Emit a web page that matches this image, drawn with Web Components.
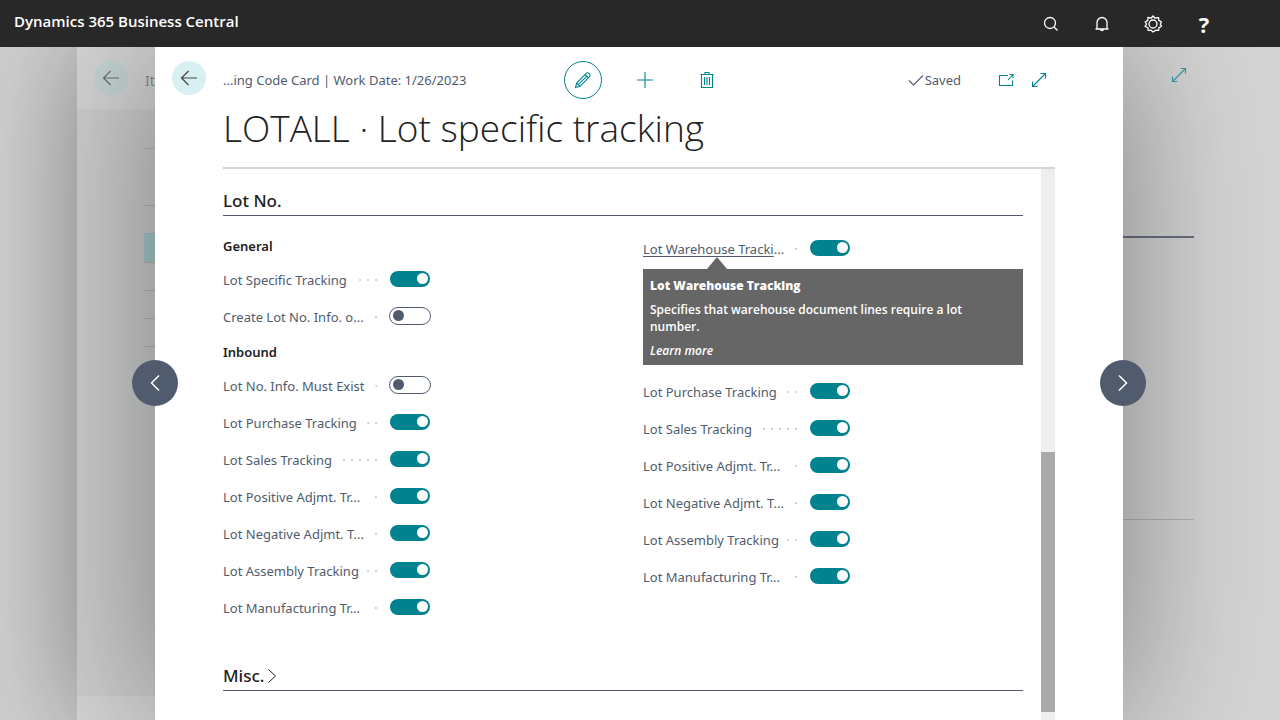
<!DOCTYPE html>
<html lang="en">
<head>
<meta charset="utf-8">
<title>Dynamics 365 Business Central</title>
<style>
html, body { margin: 0; }
body {
  --teal: #00838f; --slate: #505c6d; --ink: #212121;
  font-family: "Noto Sans", "Open Sans", sans-serif; font-size: 13px; color: var(--slate);
}
</style>
</head>
<body>
<bc-app></bc-app>
<script>
const define = (name, html, setup) => customElements.define(name, class extends HTMLElement {
  constructor() {
    super();
    this.attachShadow({ mode: 'open' }).innerHTML = html;
  }
  connectedCallback() { if (setup) setup(this, this.shadowRoot); }
});

const ICONS = {
  back: [20, '<path d="M18 10H2.500M9.500 3l-7 7 7 7"/>'],
  search: [16, '<circle cx="7" cy="7" r="5.500"/><path d="m11 11 3.500 3.500"/>'],
  bell: [16, '<path d="M3 13V6.500a5 5 0 0 1 10 0V13M1.500 13h13M6.500 13.500c.2 1.600 2.800 1.600 3 0"/>'],
  gear: [18, '<circle cx="9" cy="9" r="4"/><path d="M9 1l1.800 2 3.800-.4.1 2.700 2.800 1.700-1.200 2 1.200 2.300-2.600 1.400-.3 2.700-2.700-.2L9 17l-2-1.800-2.800.2-.4-2.700-2.700-1.400L2.500 9 1.200 7l2.600-1.700.2-2.700 3.200.4z"/>'],
  pencil: [18, '<path d="m1.500 16.500 1.200-4.500L12.500 2.200c1.700-1.300 4.500 1.300 3.300 3.300L6 15.300zM2.700 12 6 15.300M11.200 3.500l3.300 3.300M4.300 13.700l8.600-8.600"/>'],
  plus: [18, '<path d="M9 1v16M1 9h16"/>'],
  trash: [18, '<path d="M3.500 4v12.500h11V4M2.500 3.500h13M7 3V1.500h4V3M6.500 6v8M9 6v8M11.500 6v8"/>'],
  check: [16, '<path d="m1 8.500 4.500 4.500L15 3.500"/>'],
  popout: [16, '<path d="M10 3.500H1.500v10h13V8.500M10 8l5-5.500M11.500 2.500H15V6"/>'],
  expand: [16, '<path d="M1.500 14.500l13-13M9.500 1.500h5v5M1.500 9.500v5h5"/>'],
  left: [20, '<path d="m14 2.500-7.500 7.500 7.500 7.500"/>'],
  right: [20, '<path d="m6 2.500 7.500 7.500-7.500 7.500"/>'],
  chevron: [16, '<path d="m4.500 1.500 7 6.500-7 6.500"/>']
};
define('bc-icon', `<style>
  :host { display: inline-flex; flex: none; }
  svg { display: block; fill: none; stroke: currentColor; stroke-width: var(--stroke, 1.2); }
</style><svg aria-hidden="true"></svg>`, (el, root) => {
  const [size, art] = ICONS[el.getAttribute('name')];
  const svg = root.querySelector('svg');
  svg.setAttribute('viewBox', `0 0 ${size} ${size}`);
  svg.setAttribute('width', size);
  svg.setAttribute('height', size);
  svg.innerHTML = art;
});

define('bc-topbar', `<style>
  :host { display: flex; align-items: center; justify-content: space-between; height: 47px; padding: 0 59px 0 14px; background: #282828; color: #fff; }
  .brand { font: 600 15px/20px "Open Sans", sans-serif; padding-bottom: 6px; }
  nav { display: flex; }
  button { width: 34px; height: 34px; margin-left: 17px; padding: 0; border: 0; background: none; color: inherit; display: grid; place-items: center; font: 700 22px "Open Sans", sans-serif; }
  bc-icon { --stroke: 1.3; }
</style>
<div class="brand">Dynamics 365 Business Central</div>
<nav>
  <button aria-label="Search"><bc-icon name="search"></bc-icon></button>
  <button aria-label="Notifications"><bc-icon name="bell"></bc-icon></button>
  <button aria-label="Settings"><bc-icon name="gear"></bc-icon></button>
  <button aria-label="Help">?</button>
</nav>`);

define('bc-back', `<style>
  :host { display: block; flex: none; }
  button { width: 34px; height: 34px; padding: 0; border: 0; border-radius: 50%; background: var(--disc, #d9f0f2); color: #444; display: grid; place-items: center; }
</style><button aria-label="Back"><bc-icon name="back"></bc-icon></button>`);

/* Page that lies under the open card */
define('bc-list-page', `<style>
  :host { display: flex; flex-direction: column; background: #d4d4d4; box-shadow: 0 0 110px rgba(0,0,0,.3); }
  header { display: flex; align-items: center; height: 62px; padding: 0 93px 0 17px; }
  bc-back { opacity: .7; --disc: #c0d4d8; }
  header span { margin-left: 17px; padding-top: 4px; font-size: 14px; opacity: .6; flex: 1; }
  header bc-icon { color: var(--teal); opacity: .7; padding-bottom: 6px; }
  .body { flex: 1; display: flex; justify-content: space-between; background: linear-gradient(90deg, #cccecd, #cccecd 78px, #d4d4d4 300px); padding: 0 86px 0 67px; }
  .rows { width: 60px; padding-top: 39px; }
  .rows div { height: 28px; box-sizing: border-box; border-top: 1px solid #b4b6b5; }
  .rows .tall { height: 57px; }
  .rows .sel { background: #a8cccd; height: 29px; border-top-color: #a8c0c0; }
  .facts { width: 120px; padding-top: 127px; }
  .facts div { height: 281px; border-top: 2px solid #687080; }
  .facts div + div { height: 40px; border-top: 1px solid #b4b4b4; }
  footer { height: 24px; }
</style>
<header><bc-back></bc-back><span>Item</span><bc-icon name="expand"></bc-icon></header>
<div class="body">
  <div class="rows"><div class="tall"></div><div></div><div class="sel"></div><div></div><div></div><div></div><div></div></div>
  <div class="facts"><div></div><div></div></div>
</div>
<footer></footer>`);

define('bc-toolbar', `<style>
  :host { display: grid; grid-template-columns: 1fr auto 1fr; align-items: center; height: 66px; padding-left: 17px; margin-right: 5px; }
  .lead { display: flex; align-items: center; padding-bottom: 4px; }
  .crumb { margin-left: 17px; padding-top: 4px; }
  .actions { display: flex; align-items: center; gap: 24px; color: var(--teal); }
  button { width: 38px; height: 38px; padding: 0; border: 0; background: none; color: var(--teal); display: grid; place-items: center; }
  .edit { border: 1px solid var(--teal); border-radius: 50%; }
  .tail { display: flex; align-items: center; justify-content: flex-end; padding-right: 63px; }
  .saved { display: flex; align-items: center; gap: 1px; margin-right: 28px; }
  .tail button { width: 33px; }
  bc-icon { --stroke: 1.1; }
</style>
<div class="lead"><bc-back></bc-back><span class="crumb">...ing Code Card | Work Date: 1/26/2023</span></div>
<div class="actions">
  <button class="edit" aria-label="Edit"><bc-icon name="pencil"></bc-icon></button>
  <button aria-label="New"><bc-icon name="plus"></bc-icon></button>
  <button aria-label="Delete"><bc-icon name="trash"></bc-icon></button>
</div>
<div class="tail"><span class="saved"><bc-icon name="check"></bc-icon>Saved</span>
  <button aria-label="Open in new window"><bc-icon name="popout"></bc-icon></button>
  <button aria-label="Expand"><bc-icon name="expand"></bc-icon></button>
</div>`);

define('bc-section', `<style>
  :host { display: block; }
  h2 { display: flex; align-items: center; margin: 0; height: 28px; padding-top: 3px; border-bottom: 1px solid var(--slate); color: var(--ink); font-size: 17px; font-weight: 500; line-height: 28px; }
  h2 ::slotted(bc-icon) { --stroke: 1; }
</style><h2><slot name="heading"></slot></h2><slot></slot>`);

define('bc-group', `<style>
  :host { display: block; }
  h3 { margin: 0; color: var(--ink); font-size: 13px; font-weight: 600; line-height: 34px; height: 31px; }
</style><h3></h3><slot></slot>`, (el, root) => {
  root.querySelector('h3').textContent = el.getAttribute('heading') || '';
  if (!el.getAttribute('heading')) root.querySelector('h3').remove();
});

define('bc-switch', `<style>
  :host { display: flex; align-items: center; height: 37px; position: relative; }
  label { display: flex; align-items: center; width: 157px; white-space: nowrap; line-height: 18px; padding-top: 2px; margin-right: 9px; }
  .text { margin-right: 7px; }
  .more:not(:empty) { padding-right: 2px; }
  :host([underline]) u { text-underline-offset: 2px; }
  :host(:not([underline])) u { text-decoration: none; }
  i { flex: 1; height: 2px; background: linear-gradient(90deg, transparent 3px, #d0d3d6 3px, #d0d3d6 5px, transparent 5px) right center / 8px 2px repeat-x; }
  input { appearance: none; margin: 0; box-sizing: border-box; width: 42px; height: 18px; border: 1px solid var(--slate); border-radius: 9px; display: flex; align-items: center; padding: 0 3px; }
  input::before { content: ""; width: 11px; height: 11px; border-radius: 50%; background: var(--slate); }
  input:checked { border-color: transparent; background: var(--teal); background-clip: padding-box; justify-content: flex-end; padding: 0 2px; }
  input:checked::before { background: #fff; }
</style>
<label for="sw"><span class="text"><u></u><span class="more"></span></span><i></i></label>
<input id="sw" type="checkbox" role="switch"><slot></slot>`, (el, root) => {
  const text = el.getAttribute('label');
  const cut = text.endsWith('...');
  root.querySelector('u').textContent = cut ? text.slice(0, -3) : text;
  root.querySelector('.more').textContent = cut ? '...' : '';
  root.querySelector('input').checked = !el.hasAttribute('off');
});

define('bc-tip', `<style>
  :host { display: block; position: absolute; z-index: 2; top: 40px; left: 0; right: 0; box-sizing: border-box; padding: 8px 40px 6px 7px; background: #666; color: #fff; font: 600 12px/17px "Open Sans", sans-serif; }
  :host::before { content: ""; position: absolute; left: 64px; top: -12px; border: solid transparent; border-width: 0 10px 12px; border-bottom-color: #666; }
  strong { display: block; font-weight: 800; }
  p { margin: 7px 0; }
  a { color: inherit; font-style: italic; text-decoration: none; }
</style><strong><slot name="title"></slot></strong><p><slot></slot></p><a href="#learn-more">Learn more</a>`);

define('bc-scrollbar', `<style>
  :host { display: flex; flex-direction: column; width: 14px; background: #eee; }
  .above { flex: 283; } .thumb { flex: 260; background: #aaa; } .below { flex: 8; }
</style><div class="above"></div><div class="thumb"></div><div class="below"></div>`);

define('bc-card', `<style>
  :host { display: flex; flex-direction: column; position: relative; background: #fff; box-shadow: 0 0 140px rgba(0,0,0,.4); }
  h1 { margin: 0 68px; height: 54px; color: var(--ink); font: 300 37px/30px "Open Sans", sans-serif; border-bottom: 2px solid #d2d6da; white-space: nowrap; }
  .scroll { flex: 1; display: flex; gap: 18px; margin: 0 68px; }
  .content { flex: 1; padding-top: 15px; }
  .columns { display: grid; grid-template-columns: 1fr 1fr; gap: 40px; padding: 13px 0 34px; }
  bc-group + bc-group { margin-top: 1px; }
  .first { min-height: 142px; }
  .nav { position: absolute; top: 313px; width: 46px; height: 46px; padding: 0; border: 0; border-radius: 50%; background: var(--slate); color: #fff; display: grid; place-items: center; }
  .prev { left: -23px; } .next { right: -23px; }
  .nav bc-icon { --stroke: 1.5; }
</style>
<bc-toolbar></bc-toolbar>
<h1>LOTALL · Lot specific tracking</h1>
<div class="scroll">
  <div class="content">
    <bc-section><span slot="heading">Lot No.</span>
      <div class="columns">
        <div>
          <bc-group heading="General">
            <bc-switch label="Lot Specific Tracking"></bc-switch>
            <bc-switch label="Create Lot No. Info. o..." off></bc-switch>
          </bc-group>
          <bc-group heading="Inbound">
            <bc-switch label="Lot No. Info. Must Exist" off></bc-switch>
            <bc-switch label="Lot Purchase Tracking"></bc-switch>
            <bc-switch label="Lot Sales Tracking"></bc-switch>
            <bc-switch label="Lot Positive Adjmt. Tr..."></bc-switch>
            <bc-switch label="Lot Negative Adjmt. T..."></bc-switch>
            <bc-switch label="Lot Assembly Tracking"></bc-switch>
            <bc-switch label="Lot Manufacturing Tr..."></bc-switch>
          </bc-group>
        </div>
        <div>
          <bc-group class="first">
            <bc-switch label="Lot Warehouse Tracki..." underline>
              <bc-tip><span slot="title">Lot Warehouse Tracking</span>Specifies that warehouse document lines require a lot number.</bc-tip>
            </bc-switch>
          </bc-group>
          <bc-group>
            <bc-switch label="Lot Purchase Tracking"></bc-switch>
            <bc-switch label="Lot Sales Tracking"></bc-switch>
            <bc-switch label="Lot Positive Adjmt. Tr..."></bc-switch>
            <bc-switch label="Lot Negative Adjmt. T..."></bc-switch>
            <bc-switch label="Lot Assembly Tracking"></bc-switch>
            <bc-switch label="Lot Manufacturing Tr..."></bc-switch>
          </bc-group>
        </div>
      </div>
    </bc-section>
    <bc-section><span slot="heading">Misc.</span><bc-icon slot="heading" name="chevron"></bc-icon></bc-section>
  </div>
  <bc-scrollbar></bc-scrollbar>
</div>
<button class="nav prev" aria-label="Previous"><bc-icon name="left"></bc-icon></button>
<button class="nav next" aria-label="Next"><bc-icon name="right"></bc-icon></button>`);

define('bc-app', `<style>
  :host { display: flex; flex-direction: column; min-height: 100vh; }
  bc-topbar { position: relative; z-index: 1; }
  main { flex: 1; display: grid; background: #d0d0d0; overflow: hidden; }
  bc-list-page, bc-card { grid-area: 1 / 1; }
  bc-list-page { margin-left: 77px; }
  bc-card { margin: 0 157px 0 155px; }
</style>
<bc-topbar></bc-topbar>
<main><bc-list-page></bc-list-page><bc-card></bc-card></main>`);
</script>
</body>
</html>
